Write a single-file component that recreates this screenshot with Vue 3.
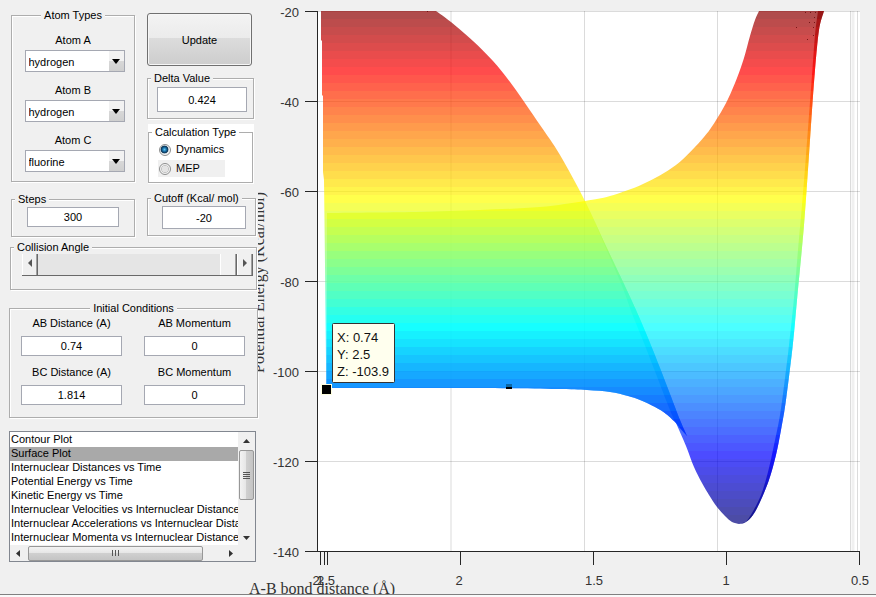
<script setup>
import { ref } from 'vue'

const atoms = ref([
  { id: 'atom-a', label: 'Atom A', value: 'hydrogen' },
  { id: 'atom-b', label: 'Atom B', value: 'hydrogen' },
  { id: 'atom-c', label: 'Atom C', value: 'fluorine' },
])
const elements = ['hydrogen', 'fluorine']
const delta = ref('0.424')
const steps = ref('300')
const cutoff = ref('-20')
const calcType = ref('Dynamics')
const angle = ref(180)
const conditions = ref([
  { id: 'ab-dist', label: 'AB Distance (A)', value: '0.74' },
  { id: 'ab-mom', label: 'AB Momentum', value: '0' },
  { id: 'bc-dist', label: 'BC Distance (A)', value: '1.814' },
  { id: 'bc-mom', label: 'BC Momentum', value: '0' },
])
const plots = [
  'Contour Plot',
  'Surface Plot',
  'Internuclear Distances vs Time',
  'Potential Energy vs Time',
  'Kinetic Energy vs Time',
  'Internuclear Velocities vs Internuclear Distance',
  'Internuclear Accelerations vs Internuclear Distance',
  'Internuclear Momenta vs Internuclear Distance',
]
const plot = ref('Surface Plot')

// Jet colour map, 64 levels, highest energy first
const clamp = (v) => Math.max(0, Math.min(1, v))
const bands = Array.from({ length: 64 }, (_, i) => {
  const t = (63 - i) / 64
  const channel = (c) => Math.round(255 * clamp(1.5 - Math.abs(4 * t - c)))
  return { y: 11 + i * 8, fill: `rgb(${channel(3)},${channel(2)},${channel(1)})` }
})
bands.push({ y: 523, fill: 'rgb(0,0,128)' })

// Edges of the surface; each one is drawn as a smooth curve through its points
const reactantEdge =
  '436,11 451,22 473,41 493,61 513,86 540,125 560,155 585,201 605,244 624,284 636,310 648,338 660,368 670,394 680,420 687,436'
const valleyFloor =
  '676,423 666,414 655,407 640,400 628,396 610,392 587,390 556,389 480,388 400,388'
const productEdge =
  '327,213 416,212 480,210 540,207 585,201 610,196 643,184 676,165 704,137 718,117 728,99 737,78 744,58 750,36 755,20 759,11'
const outerWall =
  '824,11 819,30 815,70 812,110 809,155 804,225 797,300 793,343 786,400 781,430 776,455 769,480 760,502 753,515 746,522 739,524'
const wellSide = '739,524 732,522 725,516 717,507 709,495 702,483 694,467 686,446 676,423'
const innerWall =
  '746,522 752,513 761,495 768,472 774,445 780,415 785,378 789,345 794,298 798,250 802,205 806,155 809,115 812,75 815,35 818,11'
const foldEdge = '594,220 605,244 624,284 636,310 648,338 660,368 670,394 680,420 687,436'
const foldBack = '687,436 676,423 668,405 656,374 644,343 633,316 622,286 605,246 594,220'

function smooth(edge) {
  const p = edge.split(' ').map((s) => s.split(',').map(Number))
  let d = `${p[0][0]} ${p[0][1]}`
  for (let i = 0; i < p.length - 1; i++) {
    const a = p[Math.max(0, i - 1)]
    const b = p[i]
    const c = p[i + 1]
    const e = p[Math.min(p.length - 1, i + 2)]
    d += `C${b[0] + (c[0] - a[0]) / 6} ${b[1] + (c[1] - a[1]) / 6} ${c[0] - (e[0] - b[0]) / 6} ${c[1] - (e[1] - b[1]) / 6} ${c[0]} ${c[1]}`
  }
  return d
}
const outline = (...edges) => 'M' + edges.map(smooth).join('L')

const surfaces = [
  {
    id: 'reactant',
    d: outline(reactantEdge, valleyFloor) + 'L326 388V360L325 265 324 180 323 172V96L322 95V41L321 40V11Z',
  },
  { id: 'product', d: outline(productEdge, outerWall, wellSide, valleyFloor) + 'L327 388Z' },
  { id: 'rim', d: outline(outerWall, innerWall) + 'Z' },
  { id: 'fold', d: outline(foldEdge, foldBack) + 'Z' },
]
const yTicks = [-20, -40, -60, -80, -100, -120, -140].map((v, i) => ({ v, y: 11.5 + i * 90 }))
const xMarks = [320.5, 324.5, 327.5, 460.5, 593.5, 726.5, 859.5]
const xLabels = [
  { t: '2', x: 316 }, { t: '1', x: 320 }, { t: '2.5', x: 326 }, { t: '2', x: 459 },
  { t: '1.5', x: 594 }, { t: '1', x: 726 }, { t: '0.5', x: 860 },
]
const tip = ['X: 0.74', 'Y: 2.5', 'Z: -103.9']
</script>

<template>
  <div class="window">
    <main class="layout">
      <form class="sidebar" @submit.prevent>
        <div class="top">
          <div class="col-left">
            <fieldset class="panel atoms">
              <legend class="centered">Atom Types</legend>
              <div v-for="a in atoms" :key="a.id" class="field">
                <label :for="a.id">{{ a.label }}</label>
                <div class="combo">
                  <select :id="a.id" v-model="a.value">
                    <option v-for="e in elements" :key="e">{{ e }}</option>
                  </select>
                  <span class="drop">
                    <svg width="8" height="5" viewBox="0 0 8 5"><path d="M0 0h8L4 5z" /></svg>
                  </span>
                </div>
              </div>
            </fieldset>
            <fieldset class="panel steps">
              <legend>Steps</legend>
              <input v-model="steps" type="text" aria-label="Steps" />
            </fieldset>
          </div>
          <div class="col-right">
            <button type="submit" class="update">Update</button>
            <fieldset class="panel delta">
              <legend>Delta Value</legend>
              <input v-model="delta" type="text" aria-label="Delta Value" />
            </fieldset>
            <div class="calc-wrap">
              <fieldset class="panel calc">
                <legend>Calculation Type</legend>
                <label class="radio"><input v-model="calcType" type="radio" name="calc" value="Dynamics" />Dynamics</label>
                <label class="radio shaded"><input v-model="calcType" type="radio" name="calc" value="MEP" />MEP</label>
              </fieldset>
            </div>
            <fieldset class="panel cutoff">
              <legend>Cutoff (Kcal/ mol)</legend>
              <input v-model="cutoff" type="text" aria-label="Cutoff (Kcal/ mol)" />
            </fieldset>
          </div>
        </div>

        <fieldset class="panel angle">
          <legend>Collision Angle</legend>
          <div class="slider">
            <button type="button" class="step" aria-label="Decrease angle">
              <svg width="4" height="8" viewBox="0 0 4 8"><path d="M4 0v8L0 4z" /></svg>
            </button>
            <input v-model="angle" type="range" min="0" max="180" aria-label="Collision Angle" />
            <button type="button" class="step" aria-label="Increase angle">
              <svg width="4" height="8" viewBox="0 0 4 8"><path d="M0 0v8l4-4z" /></svg>
            </button>
          </div>
        </fieldset>

        <fieldset class="panel initial">
          <legend class="centered">Initial Conditions</legend>
          <div class="conditions">
            <div v-for="c in conditions" :key="c.id" class="condition">
              <label :for="c.id">{{ c.label }}</label>
              <input :id="c.id" v-model="c.value" type="text" />
            </div>
          </div>
        </fieldset>

        <div class="listbox">
          <select v-model="plot" size="8" aria-label="Plot type">
            <option v-for="p in plots" :key="p" :value="p">{{ p }}</option>
          </select>
          <div class="vbar">
            <svg width="7" height="4" viewBox="0 0 7 4"><path d="M0 4h7L3.5 0z" /></svg>
            <div class="vthumb"><i></i><i></i><i></i><i></i></div>
            <svg class="last" width="7" height="4" viewBox="0 0 7 4"><path d="M0 0h7L3.5 4z" /></svg>
          </div>
          <div class="hbar">
            <svg width="4" height="7" viewBox="0 0 4 7"><path d="M4 0v7L0 3.5z" /></svg>
            <div class="hthumb"><i></i><i></i><i></i></div>
            <svg class="last" width="4" height="7" viewBox="0 0 4 7"><path d="M0 0v7l4-3.5z" /></svg>
          </div>
        </div>
      </form>

      <svg class="chart" viewBox="259 0 617 594" role="img" aria-label="Potential energy surface">
        <defs>
          <clipPath v-for="s in surfaces" :id="s.id" :key="s.id"><path :d="s.d" /></clipPath>
          <clipPath id="figure"><path d="M258 180h618v414H240v-20h18z" /></clipPath>
        </defs>
        <rect x="318" y="11" width="542" height="540" fill="#fff" />
        <g class="grid">
          <path v-for="t in yTicks" :key="t.v" :d="`M318 ${t.y}H860`" />
          <path d="M451 11V551M584.5 11V551M717.5 11V551M850.5 11V551M857.5 11V551" />
          <path class="faint" d="M853 11V551" />
        </g>
        <g shape-rendering="crispEdges">
          <g v-for="s in surfaces" :key="s.id" :clip-path="`url(#${s.id})`">
            <rect v-for="b in bands" :key="b.y" x="318" :y="b.y" width="542" height="8" :fill="b.fill" fill-opacity="0.7" />
          </g>
        </g>
        <path
          fill="#500"
          fill-opacity="0.7"
          d="M805 12h1v1h-1zM810 12h1v1h-1zM815 12h1v1h-1zM809 22h1v1h-1zM796 27h1v1h-1zM814 17h1v1h-1zM814 22h1v1h-1zM813 27h1v1h-1zM807 39h1v1h-1zM813 35h1v1h-1zM427 11h1v1h-1z"
        />
        <g class="axis">
          <path d="M317.5 11V551.5H860" />
          <path v-for="t in yTicks" :key="t.v" :d="`M305 ${t.y}H318`" />
          <path v-for="x in xMarks" :key="x" :d="`M${x} 551V565`" />
        </g>
        <g class="ticks">
          <text v-for="t in yTicks" :key="t.v" x="299" :y="t.y + 5.5" text-anchor="end">{{ t.v }}</text>
          <text v-for="l in xLabels" :key="l.x" :x="l.x" y="585" text-anchor="middle">{{ l.t }}</text>
        </g>
        <g class="titles" clip-path="url(#figure)">
          <text transform="translate(264 373) rotate(-90)">Potential Energy (Kcal/mol)</text>
          <text x="249" y="594">A-B bond distance (Å)</text>
        </g>
        <rect x="506" y="384" width="6" height="3" fill="#0b68a8" />
        <rect x="506" y="387" width="6" height="2" fill="#000" />
        <rect x="321.5" y="384.5" width="10" height="10" fill="#000" stroke="#ffffdf" />
        <rect x="332.5" y="323.5" width="62" height="59" rx="1" fill="#ffffee" stroke="#333" />
        <text v-for="(t, i) in tip" :key="t" class="tip" x="337" :y="342 + i * 17">{{ t }}</text>
      </svg>
    </main>
    <footer></footer>
  </div>
</template>

<style>
body {
  margin: 0;
  background: #f0f0f0;
}
</style>

<style scoped>
.window {
  font: 11px/13px "Liberation Sans", Arial, sans-serif;
  color: #000;
  background: #f0f0f0;
}
.layout {
  display: grid;
  grid-template-columns: 259px minmax(0, 1fr);
  align-items: start;
}
footer {
  height: 2px;
  border-top: 1px solid #808080;
  background: #fafafa;
}
input, select, button {
  box-sizing: border-box;
  margin: 0;
  font: inherit;
  color: inherit;
  border-radius: 0;
}
.sidebar {
  display: flex;
  flex-direction: column;
  padding: 8px 1px 0 9px;
}
.top {
  display: grid;
  grid-template-columns: 124px 109px;
  column-gap: 12px;
  padding-left: 2px;
}
.col-left, .col-right {
  display: flex;
  flex-direction: column;
}
.col-right {
  padding-top: 5px;
}
.panel {
  box-sizing: border-box;
  min-width: 0;
  margin: 0;
  padding: 0;
  border: 1px solid #adadad;
  box-shadow: 1px 1px 0 #fff, inset 1px 1px 0 #fff;
}
legend {
  margin-left: 3px;
  padding: 1px 3px 0;
  background: #f0f0f0;
}
legend.centered {
  margin: 0 auto;
}
.panel input[type="text"] {
  display: block;
  padding: 0;
  text-align: center;
  border: 1px solid #a5a8b2;
  background: #fff;
}
.atoms {
  padding: 12px 0 9px;
}
.field {
  display: flex;
  flex-direction: column;
  align-items: center;
  gap: 3px;
}
.field + .field {
  margin-top: 12px;
}
.combo {
  position: relative;
  width: 100px;
  padding-left: 3px;
}
.combo select {
  display: block;
  width: 100%;
  height: 22px;
  padding: 2px 18px 0 3px;
  appearance: none;
  border: 1px solid #a5a8b2;
  background: #fff;
}
.drop {
  position: absolute;
  top: 1px;
  right: 1px;
  bottom: 1px;
  width: 15px;
  display: flex;
  align-items: center;
  justify-content: center;
  background: linear-gradient(#f2f2f2 50%, #d8d8d8 50%, #cfcfcf);
  pointer-events: none;
}
.steps {
  height: 45px;
  margin-top: 10px;
}
.steps input {
  width: 92px;
  height: 20px;
  margin: 1px 0 0 15px;
}
.update {
  width: 105px;
  height: 53px;
  padding: 2px 0 0;
  border: 1px solid #707070;
  border-radius: 3px;
  background: linear-gradient(#f3f3f3, #ebebeb 47%, #dcdcdc 47%, #cdcdcd);
  box-shadow: inset 0 0 0 1px #f6f6f6;
}
.delta {
  width: 107px;
  height: 48px;
  margin-top: 5px;
}
.delta input {
  width: 90px;
  height: 25px;
  margin: 2px 0 0 9px;
}
.calc-wrap {
  width: 106px;
  height: 60px;
  margin: 5px 0 0 1px;
  padding: 1px 1px 0 0;
  box-sizing: border-box;
  background: #fff;
}
.calc {
  height: 58px;
}
.calc legend {
  background: #fff;
}
.radio {
  display: flex;
  align-items: center;
  gap: 5px;
  width: 66px;
  height: 17px;
  margin: 2px 0 0 9px;
  padding-left: 1px;
}
.radio.shaded {
  background: #f0f0f0;
}
.radio input {
  flex: none;
  width: 12px;
  height: 12px;
  appearance: none;
  border: 1px solid #8e8f8f;
  border-radius: 50%;
  background: radial-gradient(circle, #e4e4e4 45%, #c4c4c4 50%, #f4f4f4 62%);
}
.radio input:checked {
  background: radial-gradient(circle at 45% 45%, #6cc8ee 0, #1b7ab4 22%, #0b3050 45%, #d4dde2 54%, #f4f4f4 64%);
}
.cutoff {
  height: 45px;
  margin-top: 7px;
}
.cutoff input {
  width: 84px;
  height: 23px;
  margin: 1px 0 0 14px;
}
.angle {
  height: 50px;
  margin: 3px 1px 0;
}
.slider {
  display: flex;
  height: 22px;
  margin: 0 3px 0 11px;
  border-bottom: 1px solid #696969;
  box-sizing: border-box;
}
.step {
  flex: none;
  display: flex;
  align-items: center;
  justify-content: center;
  width: 16px;
  padding: 0 0 3px;
  border: 0;
  border-right: 1px solid #696969;
  background: #f0f0f0;
  box-shadow: inset 1px 0 0 #fff, inset -1px 0 0 #a0a0a0;
}
.step path {
  fill: #555;
}
.slider input {
  flex: 1;
  min-width: 0;
  height: 21px;
  appearance: none;
  background: #e5e5e5;
}
.slider input::-webkit-slider-thumb {
  appearance: none;
  width: 17px;
  height: 21px;
  border-right: 1px solid #696969;
  background: #f0f0f0;
  box-shadow: inset 1px 0 0 #fff, inset -1px 0 0 #a0a0a0;
}
.initial {
  margin-top: 11px;
  padding: 2px 0 12px;
}
.conditions {
  display: grid;
  grid-template-columns: 101px 101px;
  gap: 10px 22px;
  padding-left: 11px;
}
.condition {
  display: flex;
  flex-direction: column;
  align-items: center;
  gap: 6px;
}
.condition input {
  width: 100%;
  height: 20px;
}
.listbox {
  display: grid;
  grid-template-columns: minmax(0, 1fr) 17px;
  grid-template-rows: 113px 16px;
  width: 247px;
  box-sizing: border-box;
  margin-top: 13px;
  border: 1px solid #828790;
}
.listbox select {
  width: 100%;
  height: 113px;
  padding: 1px 0 0;
  border: 0;
  outline: 0;
  overflow: hidden;
  scrollbar-width: none;
  background: #fff;
}
.listbox option {
  min-height: 14px;
  height: 14px;
  padding: 0 1px;
  line-height: 14px;
  box-sizing: border-box;
  color: #000;
}
.listbox option:checked {
  color: #000;
  background: #a9a9a9 linear-gradient(#a9a9a9, #a9a9a9);
}
.vbar, .hbar {
  display: flex;
  align-items: center;
  background: #f0f0f0;
}
.vbar path, .hbar path {
  fill: #333;
}
.vbar {
  flex-direction: column;
  padding: 7px 0 5px;
  gap: 7px;
  box-sizing: border-box;
}
.hbar {
  padding: 0 5px 0 6px;
  gap: 8px;
}
.last {
  margin-top: auto;
}
.hbar .last {
  margin: 0 0 0 auto;
}
.vthumb, .hthumb {
  display: flex;
  align-items: center;
  justify-content: center;
  box-sizing: border-box;
  border: 1px solid #979797;
  border-radius: 2px;
}
.vthumb {
  flex-direction: column;
  gap: 1px;
  width: 15px;
  height: 50px;
  background: linear-gradient(90deg, #f3f3f3, #e6e6e6 45%, #cfcfcf 50%, #c4c4c4);
}
.hthumb {
  gap: 2px;
  width: 175px;
  height: 15px;
  background: linear-gradient(#f3f3f3, #e6e6e6 45%, #cfcfcf 50%, #c4c4c4);
}
.vthumb i {
  width: 7px;
  height: 1px;
  background: #555;
}
.hthumb i {
  width: 1px;
  height: 6px;
  background: #555;
}
.chart {
  display: block;
  width: 100%;
  overflow: visible;
}
.grid path {
  fill: none;
  stroke: #000;
  stroke-opacity: 0.14;
}
.grid .faint {
  stroke-width: 3;
  stroke-opacity: 0.06;
}
.axis path {
  fill: none;
  stroke: #262626;
}
.ticks text, .tip {
  font: 13px "Liberation Sans", Arial, sans-serif;
  fill: #333;
}
.tip {
  fill: #111;
}
.titles text {
  font: 16px "Liberation Serif", "Times New Roman", serif;
  fill: #333;
}
</style>
